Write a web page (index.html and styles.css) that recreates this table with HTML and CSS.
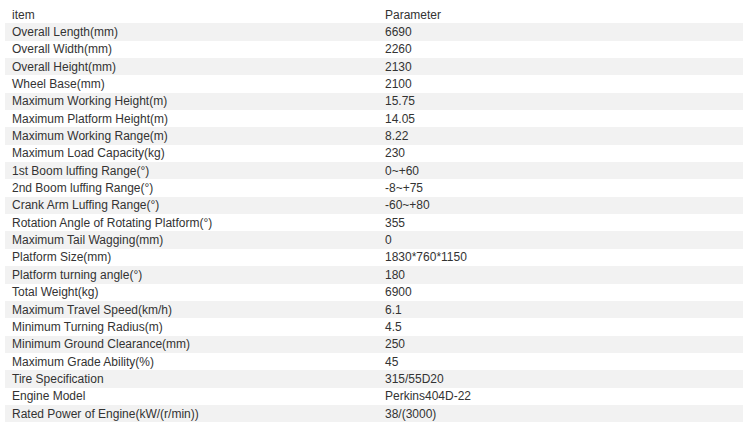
FILE: index.html
```html
<!DOCTYPE html>
<html>
<head>
<meta charset="utf-8">
<link rel="stylesheet" href="styles.css">
</head>
<body>
<table class="spec">
<tbody>
<tr><td>item</td><td>Parameter</td></tr>
<tr><td>Overall Length(mm)</td><td>6690</td></tr>
<tr><td>Overall Width(mm)</td><td>2260</td></tr>
<tr><td>Overall Height(mm)</td><td>2130</td></tr>
<tr><td>Wheel Base(mm)</td><td>2100</td></tr>
<tr><td>Maximum Working Height(m)</td><td>15.75</td></tr>
<tr><td>Maximum Platform Height(m)</td><td>14.05</td></tr>
<tr><td>Maximum Working Range(m)</td><td>8.22</td></tr>
<tr><td>Maximum Load Capacity(kg)</td><td>230</td></tr>
<tr><td>1st Boom luffing Range(°)</td><td>0~+60</td></tr>
<tr><td>2nd Boom luffing Range(°)</td><td>-8~+75</td></tr>
<tr><td>Crank Arm Luffing Range(°)</td><td>-60~+80</td></tr>
<tr><td>Rotation Angle of Rotating Platform(°)</td><td>355</td></tr>
<tr><td>Maximum Tail Wagging(mm)</td><td>0</td></tr>
<tr><td>Platform Size(mm)</td><td>1830*760*1150</td></tr>
<tr><td>Platform turning angle(°)</td><td>180</td></tr>
<tr><td>Total Weight(kg)</td><td>6900</td></tr>
<tr><td>Maximum Travel Speed(km/h)</td><td>6.1</td></tr>
<tr><td>Minimum Turning Radius(m)</td><td>4.5</td></tr>
<tr><td>Minimum Ground Clearance(mm)</td><td>250</td></tr>
<tr><td>Maximum Grade Ability(%)</td><td>45</td></tr>
<tr><td>Tire Specification</td><td>315/55D20</td></tr>
<tr><td>Engine Model</td><td>Perkins404D-22</td></tr>
<tr><td>Rated Power of Engine(kW/(r/min))</td><td>38/(3000)</td></tr>
</tbody>
</table>
</body>
</html>
```

FILE: styles.css
```css
html, body {
  margin: 0;
  padding: 0;
  background: #fff;
}
body {
  padding: 6px 7px 0 5px;
  font-family: "Liberation Sans", Arial, sans-serif;
  font-size: 12px;
  color: #333;
}
.spec {
  width: 738px;
  border-collapse: collapse;
  border-spacing: 0;
  table-layout: fixed;
}
.spec td {
  height: 17.35px;
  padding: 0 0 0 7px;
  line-height: 14px;
  vertical-align: middle;
  white-space: nowrap;
}
.spec td:first-child {
  width: 366px;
}
.spec tr:nth-child(even) td {
  background: #f2f2f2;
}
```
